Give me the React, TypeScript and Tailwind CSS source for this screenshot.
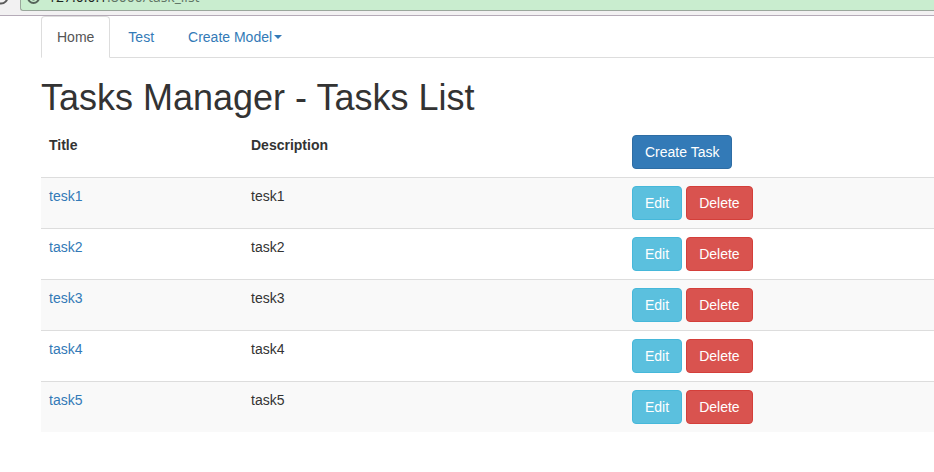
import React from "react";

const tasks = ["tesk1", "task2", "tesk3", "task4", "task5"];

const buttonBase =
  "inline-block cursor-pointer rounded-[4px] border px-3 py-[6px] text-[14px] leading-5 text-white";

function BrowserBar() {
  return (
    <header className="flex h-4 items-end overflow-hidden border-b border-[#b5abb8] bg-[#f2f1f2] pb-1">
      <div className="flex w-5 shrink-0 pb-[6px]">
        <svg className="-ml-[7px] block h-4 w-4 shrink-0" viewBox="0 0 16 16" fill="none" stroke="#5a5a5a" strokeWidth="2" aria-hidden="true">
          <circle cx="8" cy="8" r="6.5" />
        </svg>
      </div>
      <div className="flex h-7 flex-1 items-center gap-2 rounded-l-[3px] border border-r-0 border-[#9aa79c] bg-[#c9edcf] pl-[6px]">
        <svg className="block h-[13px] w-[13px] shrink-0" viewBox="0 0 13 13" fill="none" stroke="#55645a" strokeWidth="2" aria-hidden="true">
          <circle cx="6.5" cy="6.5" r="5.5" />
          <path d="M6.5 5.5v4M6.5 3v1.4" />
        </svg>
        <span className="font-['Open_Sans',sans-serif] text-[14px] leading-5 text-[#5f7465]">
          <span className="text-[#1c241e]">127.0.0.1</span>:8000/task_list
        </span>
      </div>
    </header>
  );
}

function Tabs() {
  return (
    <nav className="flex border-b border-[#dddddd]">
      <a
        href="#home"
        className="-mb-px mr-[2px] rounded-t-[4px] border border-[#dddddd] border-b-white bg-white px-[15px] py-[10px] text-[#555555]"
      >
        Home
      </a>
      <a href="#test" className="-mb-px mr-[2px] border border-transparent px-[15px] py-[10px] text-[#337ab7]">
        Test
      </a>
      <a
        href="#create"
        className="-mb-px flex items-center border border-transparent px-[15px] py-[10px] text-[#337ab7]"
      >
        Create Model
        <span className="ml-[2px] border-x-4 border-t-4 border-x-transparent border-t-[#337ab7]" />
      </a>
    </nav>
  );
}

export default function App() {
  return (
    <div className="bg-white font-['Liberation_Sans',Arial,sans-serif] text-[14px] leading-5 text-[#333333]">
      <BrowserBar />
      <main className="pb-10 pl-[41px]">
        <Tabs />
        <h1 className="mt-5 mb-[10px] text-[36px] leading-[39px] font-medium">
          Tasks Manager - Tasks List
        </h1>
        <table className="w-full table-fixed border-collapse text-left">
          <colgroup>
            <col className="w-[202px]" />
            <col className="w-[381px]" />
            <col />
          </colgroup>
          <thead>
            <tr className="align-top">
              <th className="p-2 font-bold">Title</th>
              <th className="p-2 font-bold">Description</th>
              <th className="p-2 font-normal">
                <button type="button" className={`${buttonBase} block border-[#2e6da4] bg-[#337ab7]`}>
                  Create Task
                </button>
              </th>
            </tr>
          </thead>
          <tbody>
            {tasks.map((task) => (
              <tr key={task} className="border-t border-[#dddddd] align-top odd:bg-[#f9f9f9]">
                <td className="p-2">
                  <a href={`#${task}`} className="text-[#337ab7]">
                    {task}
                  </a>
                </td>
                <td className="p-2">{task}</td>
                <td className="p-2">
                  <div className="flex gap-1">
                    <button type="button" className={`${buttonBase} border-[#46b8da] bg-[#5bc0de]`}>
                      Edit
                    </button>
                    <button type="button" className={`${buttonBase} border-[#d43f3a] bg-[#d9534f]`}>
                      Delete
                    </button>
                  </div>
                </td>
              </tr>
            ))}
          </tbody>
        </table>
      </main>
    </div>
  );
}
